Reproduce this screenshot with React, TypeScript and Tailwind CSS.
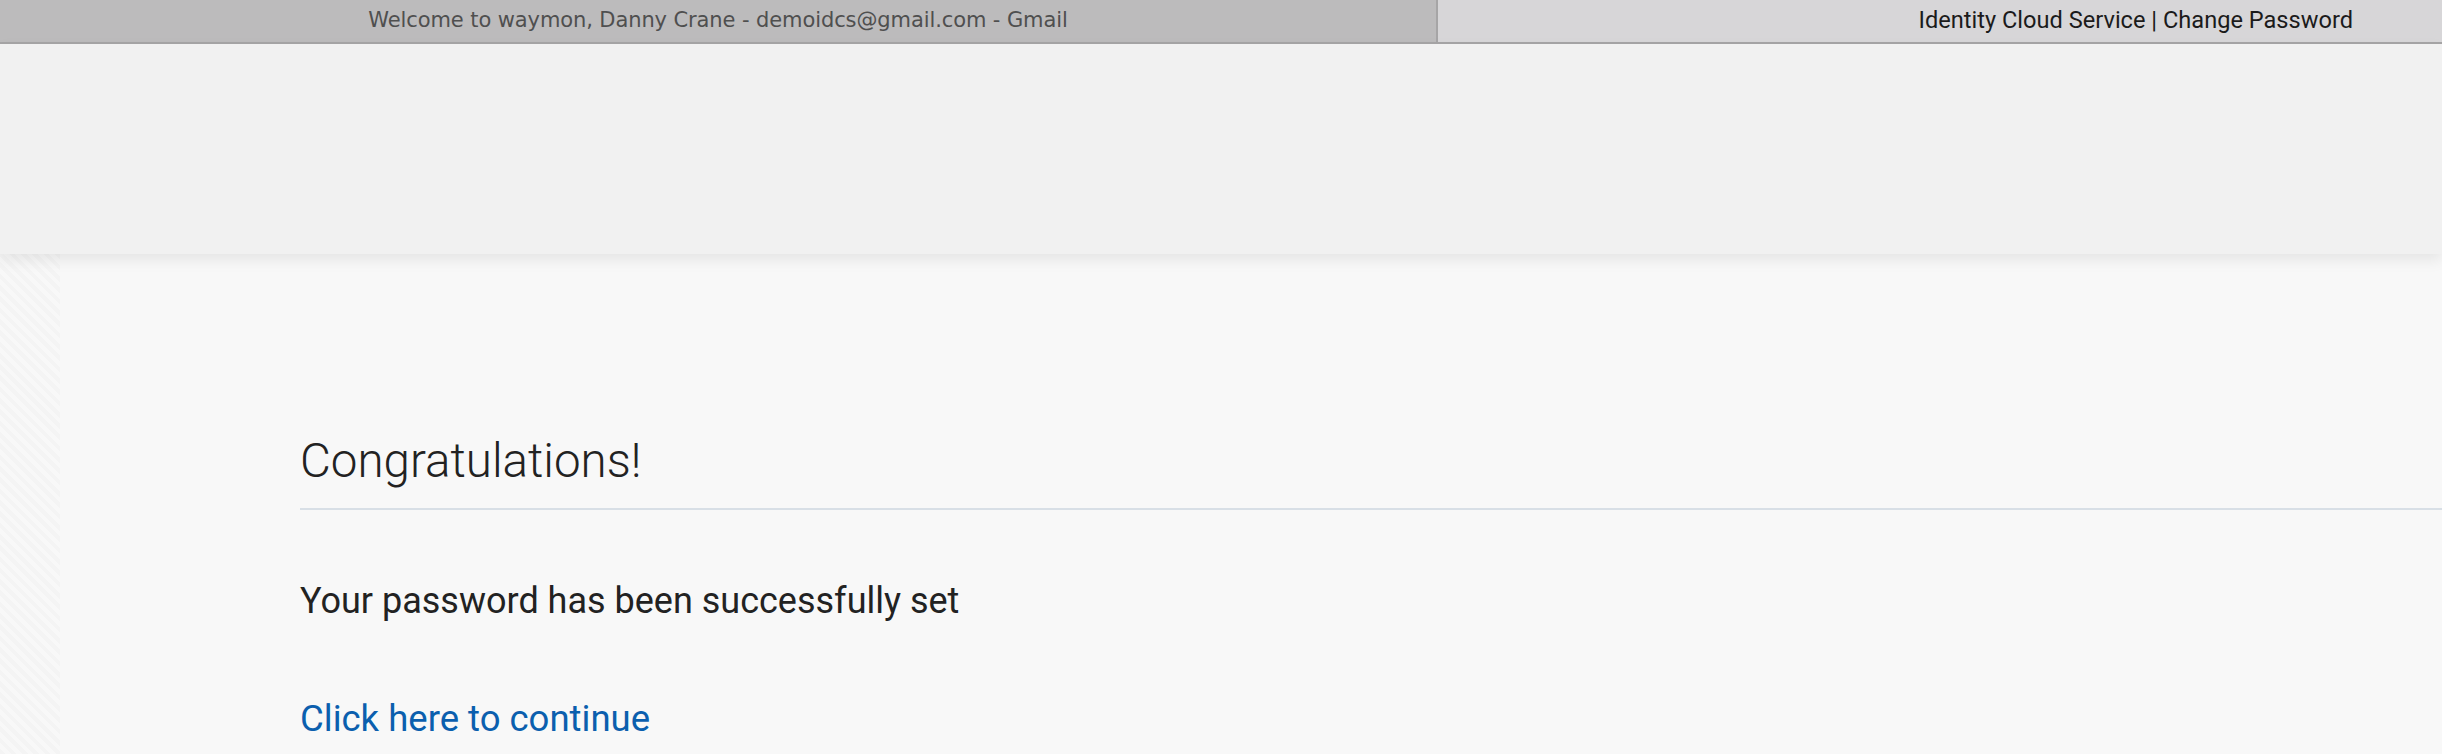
import React from "react";

export default function App() {
  return (
    <div className="w-[2442px] h-[754px] overflow-hidden flex flex-col bg-[#f8f8f8]">
      {/* tab bar */}
      <div className="h-[44px] flex border-b-2 border-[#a6a5a6] shrink-0">
        <div className="w-[1438px] bg-[#bcbbbc] flex items-center justify-center border-r-2 border-[#a6a5a6]">
          <span className="text-[21px] text-[#4f4f4f] font-['DejaVu_Sans',sans-serif] tracking-[-0.1px]">
            Welcome to waymon, Danny Crane - demoidcs@gmail.com - Gmail
          </span>
        </div>
        <div className="flex-1 bg-[#d7d6d8] flex items-center justify-end pr-[89px]">
          <span className="text-[23.6px] text-[#1b1b1b] font-['Roboto',sans-serif]">
            Identity Cloud Service | Change Password
          </span>
        </div>
      </div>
      {/* header band */}
      <div className="h-[210px] shrink-0 bg-[#f1f1f1] relative z-10 shadow-[0_6px_14px_rgba(0,0,0,0.08)]" />
      {/* body */}
      <div className="flex-1 flex bg-[#f8f8f8]">
        <div className="w-[60px] shrink-0 bg-[repeating-linear-gradient(45deg,#f4f4f4_0px,#f4f4f4_4px,#f8f8f8_4px,#f8f8f8_8px)]" />
        <div className="flex-1 pl-[240px] pt-[181px] font-['Roboto',sans-serif]">
          <h1 className="text-[47.5px] leading-[52px] font-light text-[#222222]">Congratulations!</h1>
          <div className="mt-[21px] h-[2px] bg-[#d8dfe6]" />
          <p className="mt-[70px] text-[36px] leading-[42px] text-[#222222]">
            Your password has been successfully set
          </p>
          <a className="block mt-[76px] text-[36.5px] leading-[42px] text-[#0b5fae]">Click here to continue</a>
        </div>
      </div>
    </div>
  );
}
